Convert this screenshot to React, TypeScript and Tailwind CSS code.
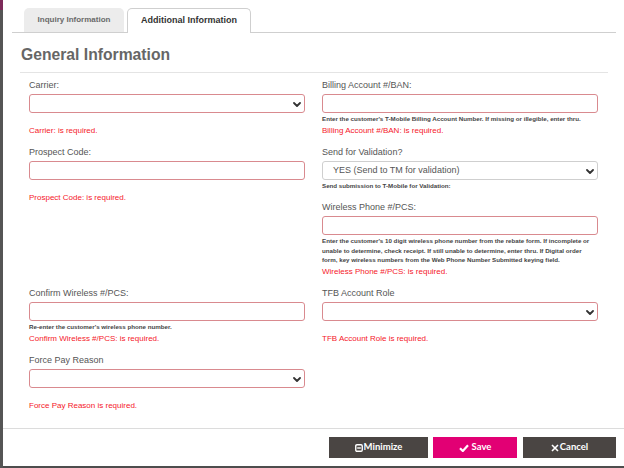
import React from 'react';

const LABEL = 'h-[10px] leading-[10px] text-[9px] text-[#555] mb-[4px] whitespace-nowrap';
const ERROR = 'mt-[2px] h-[10px] leading-[10px] text-[8px] text-[#f5182a] whitespace-nowrap';
const HELP = 'mt-[1px] min-h-[10px] leading-[9.5px] text-[6.2px] font-bold text-[#444] whitespace-nowrap';

const Chevron: React.FC = () => (
  <svg width="8" height="5" viewBox="0 0 8 5" className="absolute right-[3px] top-[7px]">
    <path d="M1 1 L4 4 L7 1" fill="none" stroke="#333" strokeWidth="1.8" strokeLinecap="round" strokeLinejoin="round" />
  </svg>
);

interface FieldProps {
  label: string;
  select?: boolean;
  value?: string;
  neutral?: boolean;
  help?: string[];
  error?: string;
}

const Field: React.FC<FieldProps> = ({ label, select, value, neutral, help, error }) => (
  <div className="mb-[11px]">
    <div className={LABEL}>{label}</div>
    <div
      className={`relative h-[19px] rounded-[3px] border bg-white ${neutral ? 'border-[#cfcfcf]' : 'border-[#d98a8f]'}`}
    >
      {value && <span className="absolute left-[10px] top-[3px] text-[9px] leading-[11px] text-[#555]">{value}</span>}
      {select && <Chevron />}
    </div>
    {help ? (
      <div className={HELP}>
        {help.map((line) => (
          <div key={line}>{line}</div>
        ))}
      </div>
    ) : (
      <div className={HELP} />
    )}
    {error && <div className={ERROR}>{error}</div>}
  </div>
);

const MinusSquare = () => (
  <svg width="8" height="8" viewBox="0 0 8 8" className="mr-[1px]">
    <rect x="0.75" y="0.75" width="6.5" height="6.5" rx="1.2" fill="none" stroke="white" strokeWidth="1.4" />
    <path d="M2.2 4 H5.8" stroke="white" strokeWidth="1.4" />
  </svg>
);

const Check = () => (
  <svg width="10" height="8" viewBox="0 0 10 8" className="mr-[3px]">
    <path d="M1 4.2 L3.8 7 L9 1.2" fill="none" stroke="white" strokeWidth="2.2" strokeLinejoin="round" />
  </svg>
);

const Cross = () => (
  <svg width="8" height="8" viewBox="0 0 8 8" className="mr-[1px]">
    <path d="M1 1 L7 7 M7 1 L1 7" stroke="white" strokeWidth="1.6" />
  </svg>
);

export default function App() {
  return (
    <div className="w-[624px] h-[468px] flex bg-white overflow-hidden font-['Liberation_Sans',Arial,sans-serif]">
      <div className="w-[3px] flex flex-col bg-[#555]">
        <div className="h-[10px] bg-[#7d2a5a]" />
      </div>
      <div className="flex-1 flex flex-col border-b-2 border-[#4d4d4d]">
        {/* tabs */}
        <div className="ml-[9px] mr-[8px] pt-[8px] pl-[12px] flex items-end border-b border-[#cfcfcf]">
          <div className="w-[100px] h-[24px] rounded-t-[5px] bg-[#ececec] flex items-center justify-center text-[8px] font-bold text-[#6a6a6a]">
            Inquiry Information
          </div>
          <div className="ml-[3px] w-[124px] h-[25px] -mb-px rounded-t-[5px] border border-b-0 border-[#cfcfcf] bg-white flex items-center justify-center text-[9px] font-bold text-[#333]">
            Additional Information
          </div>
        </div>

        {/* heading */}
        <div className="ml-[17px] mr-[16px] mt-[12px] pb-[7px] pl-[1px] border-b border-[#e4e4e4]">
          <h2 className="text-[15.7px] leading-[20px] font-bold text-[#666]">General Information</h2>
        </div>

        {/* form */}
        <div className="mt-[7px] px-[26px] grid grid-cols-2 gap-x-[17px] items-start">
          <Field label="Carrier:" select error="Carrier: is required." />
          <Field
            label="Billing Account #/BAN:"
            help={["Enter the customer's T-Mobile Billing Account Number. If missing or illegible, enter thru."]}
            error="Billing Account #/BAN: is required."
          />

          <Field label="Prospect Code:" error="Prospect Code: is required." />
          <div>
            <Field
              label="Send for Validation?"
              select
              neutral
              value="YES (Send to TM for validation)"
              help={['Send submission to T-Mobile for Validation:']}
            />
            <Field
              label="Wireless Phone #/PCS:"
              help={[
                "Enter the customer's 10 digit wireless phone number from the rebate form. If incomplete or",
                'unable to determine, check receipt. If still unable to determine, enter thru. If Digital order',
                'form, key wireless numbers from the Web Phone Number Submitted keying field.',
              ]}
              error="Wireless Phone #/PCS: is required."
            />
          </div>

          <Field
            label="Confirm Wireless #/PCS:"
            help={["Re-enter the customer's wireless phone number."]}
            error="Confirm Wireless #/PCS: is required."
          />
          <Field label="TFB Account Role" select error="TFB Account Role is required." />

          <Field label="Force Pay Reason" select error="Force Pay Reason is required." />
          <div />
        </div>

        <div className="flex-1" />

        {/* footer */}
        <div className="border-t border-[#dcdcdc] pt-[8px] pb-[8px] pr-[8px] flex justify-end font-['Lato',sans-serif] text-[9.5px] font-bold text-white">
          <button className="w-[99px] h-[21px] bg-[#4a4543] flex items-center justify-center">
            <MinusSquare />
            Minimize
          </button>
          <button className="ml-[5px] w-[84px] h-[21px] bg-[#e20074] flex items-center justify-center">
            <Check />
            Save
          </button>
          <button className="ml-[6px] w-[93px] h-[21px] bg-[#4a4543] flex items-center justify-center">
            <Cross />
            Cancel
          </button>
        </div>
      </div>
    </div>
  );
}
